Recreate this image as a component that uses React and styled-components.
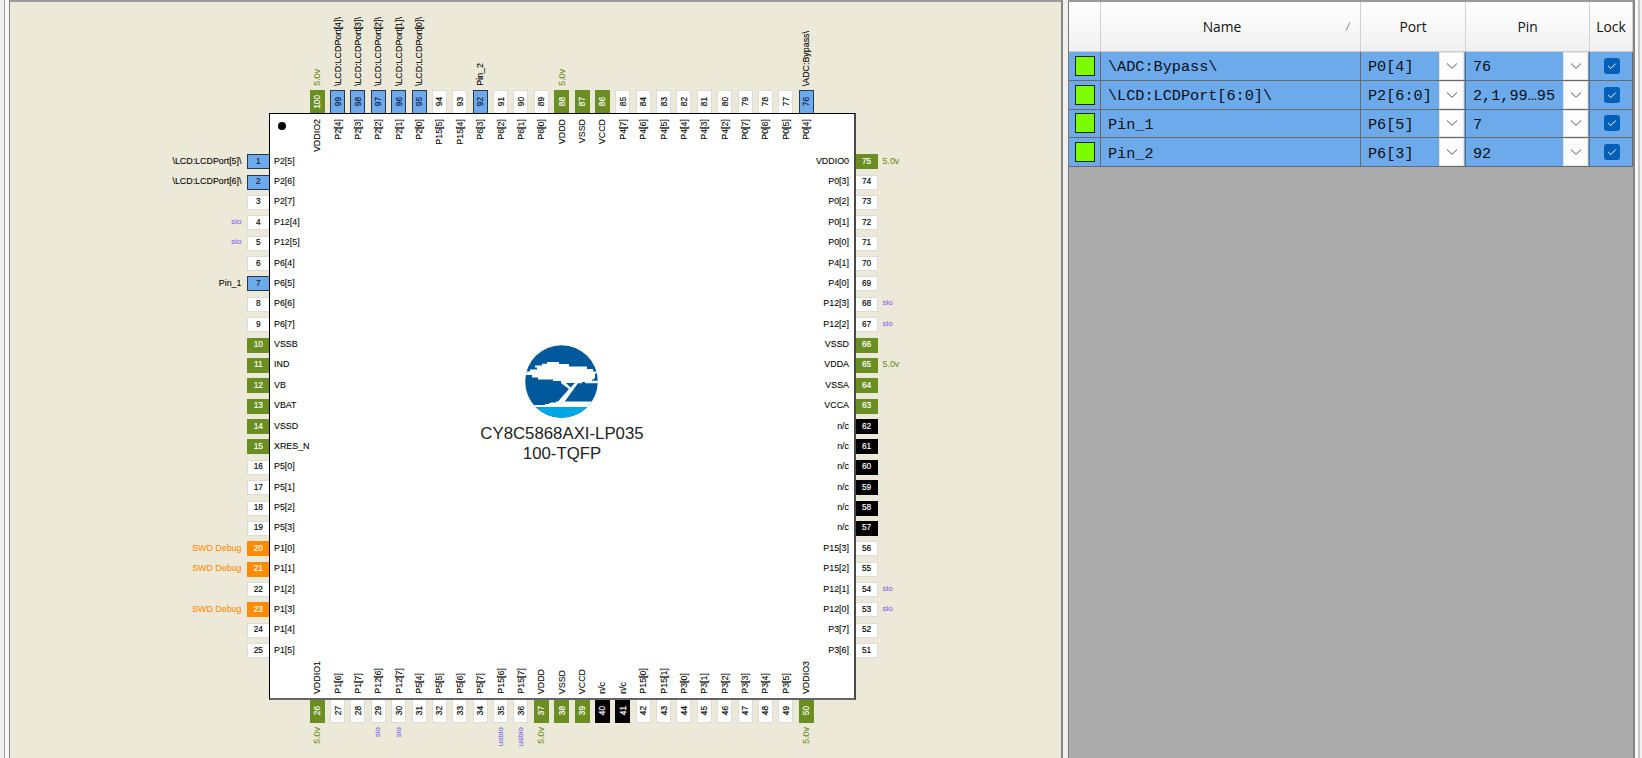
import React from 'react';
import styled, { createGlobalStyle, css } from 'styled-components';

const PITCH = 20.375;

const GlobalStyle = createGlobalStyle`
  * { box-sizing: border-box; }
  body { margin: 0; background: #f0f0f0; overflow: hidden; }
`;

const Window = styled.main`
  display: flex;
  width: 1642px;
  height: 758px;
  background: #f0f0f0;
  font-family: 'Liberation Sans', Arial, sans-serif;
`;

const Edge = styled.div`
  flex: none;
  width: ${(p) => p.$w}px;
  background: ${(p) => p.$color};
`;

const Canvas = styled.section`
  flex: none;
  width: 1054px;
  border: 1px solid #7d7d7d;
  border-top: 2px solid #9a9a9a;
  border-right: 2px solid #858585;
  border-bottom: 0;
  background: #ece9d8;
  display: grid;
  grid-template-columns: 236.5px 22.5px 587px 22px 1fr;
  grid-template-rows: 88px 23px 587px 23px 1fr;
  overflow: hidden;
`;

const Package = styled.div`
  grid-area: 3 / 3;
  background: #fff;
  border: 1px solid #000;
  border-right: 2px solid #4a4a4a;
  border-bottom: 2px solid #666;
  display: flex;
  flex-direction: column;
  align-items: center;
  padding: 231px 2px 0 0;
`;

const PinOneDot = styled.div`
  grid-area: 3 / 3;
  width: 8px;
  height: 8px;
  margin: 9px 0 0 9px;
  border-radius: 50%;
  background: #000;
`;

const PartName = styled.div`
  margin-top: 6px;
  padding-left: 2px;
  text-align: center;
  font-size: 16.8px;
  line-height: 20px;
  color: #222;
  white-space: nowrap;
`;

const areas = {
  left: '3 / 1 / 4 / 4',
  right: '3 / 3 / 4 / 6',
  top: '1 / 3 / 4 / 4',
  bottom: '3 / 3 / 6 / 4',
};

const isRow = (side) => side === 'left' || side === 'right';

const Side = styled.div`
  grid-area: ${(p) => areas[p.$side]};
  display: flex;
  flex-direction: ${(p) => (isRow(p.$side) ? 'column' : 'row')};
  ${(p) => (isRow(p.$side) ? 'padding-top: 38.5px;' : 'padding-left: 38px;')}
`;

const Lead = styled.div`
  flex: none;
  display: grid;
  ${(p) => p.$side === 'left' && css`height: ${PITCH}px; grid-template-columns: 236.5px 22.5px 587px;`}
  ${(p) => p.$side === 'right' && css`height: ${PITCH}px; grid-template-columns: 587px 22px 1fr;`}
  ${(p) => p.$side === 'top' && css`width: ${PITCH}px; grid-template-rows: 88px 23px 587px;`}
  ${(p) => p.$side === 'bottom' && css`width: ${PITCH}px; grid-template-rows: 587px 23px 1fr;`}
  ${(p) => (isRow(p.$side) ? 'align-items: center;' : 'justify-items: center;')}
`;

const fills = {
  free: ['#fff', '#000', '#dcdcdc'],
  used: ['#6daaec', '#101840', '#26384c'],
  power: ['#6b8e23', '#fff', '#6b8e23'],
  debug: ['#ff8c00', '#fff', '#ff8c00'],
  none: ['#000', '#fff', '#000'],
};

const vertical = css`
  writing-mode: vertical-rl;
  transform: rotate(180deg);
`;

const Pad = styled.div`
  display: flex;
  align-items: center;
  justify-content: center;
  width: ${(p) => (isRow(p.$side) ? '100%' : '15px')};
  height: ${(p) => (isRow(p.$side) ? 15 : 23)}px;
  background: ${(p) => fills[p.$kind][0]};
  color: ${(p) => fills[p.$kind][1]};
  border: 1px solid ${(p) => fills[p.$kind][2]};
  border-${(p) => ({ left: 'right', right: 'left', top: 'bottom', bottom: 'top' })[p.$side]}-width: 0;
  font-size: 8.3px;
  line-height: 8px;
`;

const Digits = styled.span`
  -webkit-text-stroke: 0.15px currentColor;
  ${(p) => !isRow(p.$side) && vertical}
  ${(p) => isRow(p.$side) && 'padding-bottom: 2px;'}
`;

const noteColors = { signal: '#000', power: '#6b8e23', special: '#7b68ee', debug: '#ff8c00' };

const Label = styled.span`
  font-size: ${(p) => (p.$tone === 'special' ? 8 : 8.9)}px;
  line-height: 10px;
  white-space: nowrap;
  color: ${(p) => noteColors[p.$tone]};
  -webkit-text-stroke: 0.08px currentColor;
  ${(p) => !isRow(p.$side) && vertical}
  ${(p) => p.$side === 'left' && (p.$inside ? 'justify-self: start; padding: 0 0 2px 5px;' : 'justify-self: end; padding: 0 5px 2px 0;')}
  ${(p) => p.$side === 'right' && (p.$inside ? 'justify-self: end; padding: 0 7px 2px 0;' : 'justify-self: start; padding: 0 0 2px 4.5px;')}
  ${(p) => p.$side === 'top' && (p.$inside ? 'align-self: start; margin-top: 6px;' : 'align-self: end; margin-bottom: 4px;')}
  ${(p) => p.$side === 'bottom' && (p.$inside ? 'align-self: end; margin-bottom: 6px;' : 'align-self: start; margin-top: 4px;')}
`;

const left = ['P2[5]', 'P2[6]', 'P2[7]', 'P12[4]', 'P12[5]', 'P6[4]', 'P6[5]', 'P6[6]', 'P6[7]', 'VSSB', 'IND', 'VB', 'VBAT', 'VSSD', 'XRES_N', 'P5[0]', 'P5[1]', 'P5[2]', 'P5[3]', 'P1[0]', 'P1[1]', 'P1[2]', 'P1[3]', 'P1[4]', 'P1[5]'];
const bottom = ['VDDIO1', 'P1[6]', 'P1[7]', 'P12[6]', 'P12[7]', 'P5[4]', 'P5[5]', 'P5[6]', 'P5[7]', 'P15[6]', 'P15[7]', 'VDDD', 'VSSD', 'VCCD', 'n/c', 'n/c', 'P15[0]', 'P15[1]', 'P3[0]', 'P3[1]', 'P3[2]', 'P3[3]', 'P3[4]', 'P3[5]', 'VDDIO3'];
const right = ['P3[6]', 'P3[7]', 'P12[0]', 'P12[1]', 'P15[2]', 'P15[3]', 'n/c', 'n/c', 'n/c', 'n/c', 'n/c', 'n/c', 'VCCA', 'VSSA', 'VDDA', 'VSSD', 'P12[2]', 'P12[3]', 'P4[0]', 'P4[1]', 'P0[0]', 'P0[1]', 'P0[2]', 'P0[3]', 'VDDIO0'];
const top = ['P0[4]', 'P0[5]', 'P0[6]', 'P0[7]', 'P4[2]', 'P4[3]', 'P4[4]', 'P4[5]', 'P4[6]', 'P4[7]', 'VCCD', 'VSSD', 'VDDD', 'P6[0]', 'P6[1]', 'P6[2]', 'P6[3]', 'P15[4]', 'P15[5]', 'P2[0]', 'P2[1]', 'P2[2]', 'P2[3]', 'P2[4]', 'VDDIO2'];

const signals = {
  1: '\\LCD:LCDPort[5]\\', 2: '\\LCD:LCDPort[6]\\', 7: 'Pin_1', 76: '\\ADC:Bypass\\', 92: 'Pin_2',
  95: '\\LCD:LCDPort[0]\\', 96: '\\LCD:LCDPort[1]\\', 97: '\\LCD:LCDPort[2]\\', 98: '\\LCD:LCDPort[3]\\', 99: '\\LCD:LCDPort[4]\\',
};
const special = { 4: 'sio', 5: 'sio', 29: 'sio', 30: 'sio', 35: 'usbio', 36: 'usbio', 53: 'sio', 54: 'sio', 67: 'sio', 68: 'sio' };
const supplied = [26, 37, 50, 65, 75, 88, 100];
const debug = [20, 21, 23];

const noteFor = (n) => {
  if (signals[n]) return ['signal', signals[n]];
  if (special[n]) return ['special', special[n]];
  if (supplied.includes(n)) return ['power', '5.0v'];
  if (debug.includes(n)) return ['debug', 'SWD Debug'];
  return ['signal', ''];
};

const kindFor = (n, name) => {
  if (signals[n]) return 'used';
  if (debug.includes(n)) return 'debug';
  if (name === 'n/c') return 'none';
  return name.startsWith('P') ? 'free' : 'power';
};

const number = (names, first) => names.map((name, i) => ({ n: first + i, name }));

const sides = [
  ['left', number(left, 1)],
  ['bottom', number(bottom, 26)],
  ['right', number(right, 51).reverse()],
  ['top', number(top, 76).reverse()],
];

function PinLead({ side, n, name }) {
  const [tone, text] = noteFor(n);
  const parts = [
    <Label key="note" $side={side} $tone={tone}>{text}</Label>,
    <Pad key="pad" $side={side} $kind={kindFor(n, name)}><Digits $side={side}>{n}</Digits></Pad>,
    <Label key="name" $side={side} $tone="signal" $inside>{name}</Label>,
  ];
  if (side === 'right' || side === 'bottom') parts.reverse();
  return <Lead $side={side}>{parts}</Lead>;
}

function Logo() {
  return (
    <svg width="73" height="73" viewBox="0 0 73 73">
      <defs><clipPath id="disc"><circle cx="36.5" cy="36.5" r="36.3" /></clipPath></defs>
      <g clipPath="url(#disc)">
        <rect width="73" height="73" fill="#00589c" />
        <path fill="#fff" d="M0 60H24V58H36L39 56.5H73V62.2H0Z" />
        <rect y="62.2" width="73" height="11" fill="#00a7e7" />
        <path
          fill="#fff"
          d="M0 26.5H5V24.5H12V22.5H10V20.5H17V18.8H22V17H34V19H44V21.5H62V24H68V26.5H73V28.5H70V33H69V34.5H67V35.8H73V38.3H60V37H57V38.3H53L39 57.5H36V60H20V59H26V57.5H31V56.5H33L44 44L36 38V36H28V34.5H13V32.5H7V30H0Z"
        />
        <path fill="#00589c" d="M41 38H50L45.5 42.5Z" />
      </g>
    </svg>
  );
}

const Assignments = styled.section`
  flex: none;
  width: 567px;
  background: #ababab;
  border-top: 2px solid #999;
  border-left: 1px solid #777;
  border-right: 2px solid #858585;
`;

const columns = '32px 260px 105px 124px 43px';

const Header = styled.div`
  display: grid;
  grid-template-columns: ${columns};
  height: 50px;
  background: linear-gradient(#fff, #f0f0f0);
  border-bottom: 1px solid #ccc;
  font: 13.8px 'Open Sans', sans-serif;
  color: #111;
`;

const HeaderCell = styled.div`
  display: flex;
  align-items: center;
  justify-content: center;
  border-right: 1px solid #d0d0d0;
  padding-right: ${(p) => p.$pad || 0}px;
`;

const SortMark = styled.svg`
  margin-left: 101px;
  margin-right: -116px;
`;

const Row = styled.div`
  display: grid;
  grid-template-columns: ${columns};
  height: 28.75px;
  background: #6daaec;
  font: 15.2px 'Liberation Mono', monospace;
  color: #0a0e14;
`;

const Cell = styled.div`
  display: flex;
  align-items: center;
  justify-content: ${(p) => (p.$center ? 'center' : 'flex-start')};
  border-right: 1px solid #66696d;
  border-bottom: 1px solid #66696d;
  padding-left: ${(p) => (p.$center ? 0 : 7)}px;
  white-space: pre;
`;

const Value = styled.span`
  flex: 1;
  padding-top: 3px;
`;

const Swatch = styled.span`
  width: 20px;
  height: 20px;
  background: #7cfc00;
  border: 1px solid #142800;
`;

const DropButton = styled.span`
  display: flex;
  align-items: center;
  justify-content: center;
  align-self: stretch;
  width: 25px;
  margin-right: 1px;
  background: #fdfdfd;
  border: 1px solid #e4e4e4;
`;

const Check = styled.span`
  display: flex;
  align-items: center;
  justify-content: center;
  width: 16px;
  height: 16px;
  margin-left: 1px;
  border-radius: 3px;
  background: #005fb8;
`;

function Drop() {
  return (
    <DropButton>
      <svg width="12" height="8" viewBox="0 0 12 8"><path d="M1 1.5L6 6.3L11 1.5" fill="none" stroke="#555" /></svg>
    </DropButton>
  );
}

const rows = [
  ['\\ADC:Bypass\\', 'P0[4]', '76'],
  ['\\LCD:LCDPort[6:0]\\', 'P2[6:0]', '2,1,99…95'],
  ['Pin_1', 'P6[5]', '7'],
  ['Pin_2', 'P6[3]', '92'],
];

export default function App() {
  return (
    <Window>
      <GlobalStyle />
      <Edge $w={4} $color="#f0f0f0" />
      <Edge $w={1} $color="#a0a0a0" />
      <Edge $w={4} $color="#fafafa" />
      <Canvas>
        <Package>
          <Logo />
          <PartName>CY8C5868AXI-LP035<br />100-TQFP</PartName>
        </Package>
        <PinOneDot />
        {sides.map(([side, pins]) => (
          <Side key={side} $side={side}>
            {pins.map((pin) => <PinLead key={pin.n} side={side} {...pin} />)}
          </Side>
        ))}
      </Canvas>
      <Edge $w={5} $color="#f0f0f0" />
      <Assignments>
        <Header>
          <HeaderCell />
          <HeaderCell $pad={17}>
            Name
            <SortMark width="15" height="12" viewBox="0 0 15 12">
              <path d="M4 10L8 1" stroke="#888" fill="none" />
              <path d="M8 1L12 10H4" stroke="#fff" fill="none" />
            </SortMark>
          </HeaderCell>
          <HeaderCell>Port</HeaderCell>
          <HeaderCell>Pin</HeaderCell>
          <HeaderCell>Lock</HeaderCell>
        </Header>
        {rows.map(([name, port, pin]) => (
          <Row key={name}>
            <Cell $center><Swatch /></Cell>
            <Cell><Value>{name}</Value></Cell>
            <Cell><Value>{port}</Value><Drop /></Cell>
            <Cell><Value>{pin}</Value><Drop /></Cell>
            <Cell $center>
              <Check>
                <svg width="10" height="8" viewBox="0 0 10 8"><path d="M1.2 4L3.8 6.5L8.8 1.5" fill="none" stroke="#fff" /></svg>
              </Check>
            </Cell>
          </Row>
        ))}
      </Assignments>
      <Edge $w={3} $color="#fafafa" />
      <Edge $w={2} $color="#c8c8c8" />
      <Edge $w={2} $color="#f0f0f0" />
    </Window>
  );
}
